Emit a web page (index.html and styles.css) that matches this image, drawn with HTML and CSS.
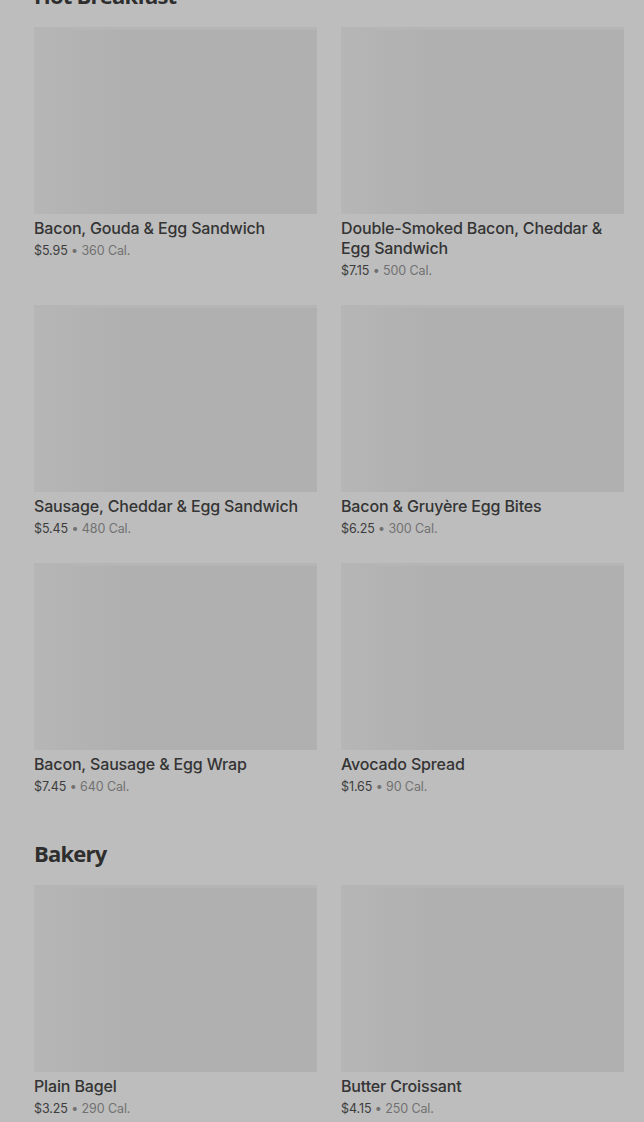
FILE: index.html
```html
<!DOCTYPE html>
<html lang="en">
<head>
  <meta charset="UTF-8">
  <meta name="viewport" content="width=device-width, initial-scale=1.0">
  <title>Menu</title>
  <link rel="stylesheet" href="styles.css">
</head>
<body>
  <div class="menu">
    <!-- Hot Breakfast -->
    <section class="category">
      <h2>Hot Breakfast</h2>
      <div class="product-grid">
        <div class="product">
          <div class="product-img"></div>
          <div class="product-name">Bacon, Gouda &amp; Egg Sandwich</div>
          <div class="product-meta"><span class="price">$5.95</span> <span class="cal">• 360 Cal.</span></div>
        </div>
        <div class="product">
          <div class="product-img"></div>
          <div class="product-name">Double-Smoked Bacon, Cheddar &amp; Egg Sandwich</div>
          <div class="product-meta"><span class="price">$7.15</span> <span class="cal">• 500 Cal.</span></div>
        </div>
        <div class="product">
          <div class="product-img"></div>
          <div class="product-name">Sausage, Cheddar &amp; Egg Sandwich</div>
          <div class="product-meta"><span class="price">$5.45</span> <span class="cal">• 480 Cal.</span></div>
        </div>
        <div class="product">
          <div class="product-img"></div>
          <div class="product-name">Bacon &amp; Gruyère Egg Bites</div>
          <div class="product-meta"><span class="price">$6.25</span> <span class="cal">• 300 Cal.</span></div>
        </div>
        <div class="product">
          <div class="product-img"></div>
          <div class="product-name">Bacon, Sausage &amp; Egg Wrap</div>
          <div class="product-meta"><span class="price">$7.45</span> <span class="cal">• 640 Cal.</span></div>
        </div>
        <div class="product">
          <div class="product-img"></div>
          <div class="product-name">Avocado Spread</div>
          <div class="product-meta"><span class="price">$1.65</span> <span class="cal">• 90 Cal.</span></div>
        </div>
      </div>
    </section>
    <!-- Bakery -->
    <section class="category">
      <h2>Bakery</h2>
      <div class="product-grid">
        <div class="product">
          <div class="product-img"></div>
          <div class="product-name">Plain Bagel</div>
          <div class="product-meta"><span class="price">$3.25</span> <span class="cal">• 290 Cal.</span></div>
        </div>
        <div class="product">
          <div class="product-img"></div>
          <div class="product-name">Butter Croissant</div>
          <div class="product-meta"><span class="price">$4.15</span> <span class="cal">• 250 Cal.</span></div>
        </div>
      </div>
    </section>
  </div>
</body>
</html>
```

FILE: styles.css
```css
body {
  margin: 0;
  padding: 0;
  background: #bdbdbd;
  font-family: 'Inter', sans-serif;
  color: #333;
  overflow: hidden;
}
.menu {
  padding: 0 20px 0 34px;
  margin-top: -21px;
}
.category {
  margin-bottom: 40px;
}
.category h2 {
  margin: 0 0 16px 0;
  font-family: 'Open Sans', sans-serif;
  font-weight: 700;
  font-size: 22px;
  line-height: 32px;
  letter-spacing: -0.8px;
  color: #2e2e2e;
}
.product-grid {
  display: grid;
  grid-template-columns: 1fr 1fr;
  column-gap: 24px;
  row-gap: 24px;
}
.product-img {
  height: 187px;
  background: linear-gradient(90deg, #b6b6b6 0, #b3b3b3 40px, #b0b0b0 90px, #b0b0b0 100%);
  box-shadow: inset 0 3px 0 #b5b5b5;
}
.product-name {
  margin-top: 4px;
  font-size: 16px;
  font-weight: 500;
  line-height: 20px;
  letter-spacing: -0.15px;
  color: #343434;
}
.product-meta {
  margin-top: 3px;
  font-size: 12.5px;
  line-height: 20px;
  letter-spacing: -0.1px;
}
.price {
  color: #3c3c3c;
}
.cal {
  color: #717171;
}
```
